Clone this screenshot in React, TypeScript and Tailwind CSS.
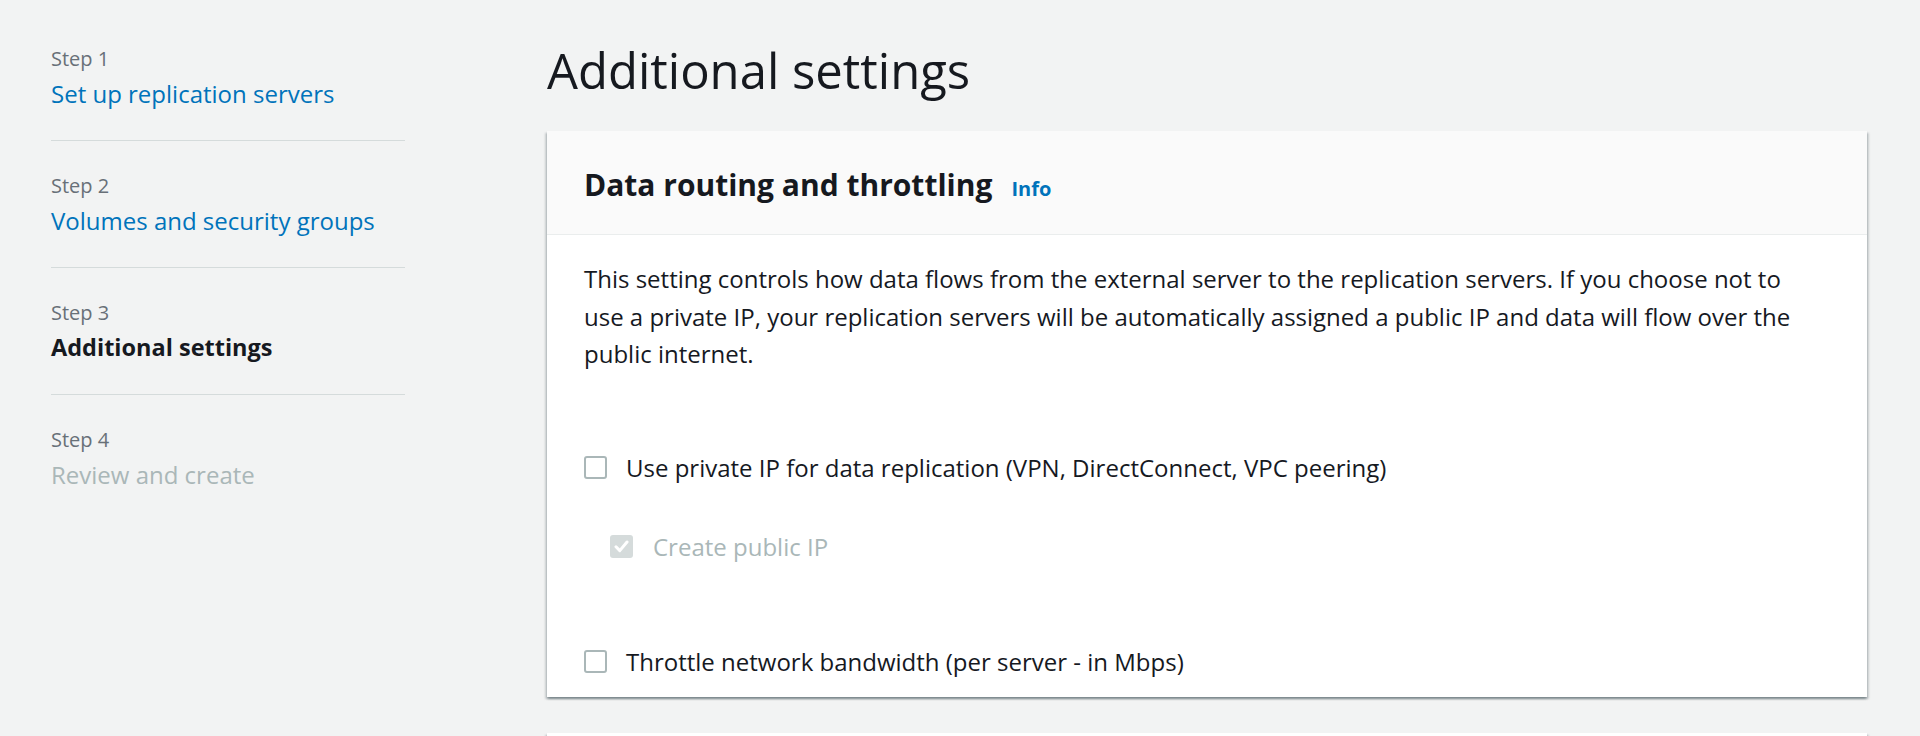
import React from "react";

const steps = [
  { label: "Step 1", title: "Set up replication servers", state: "link" },
  { label: "Step 2", title: "Volumes and security groups", state: "link" },
  { label: "Step 3", title: "Additional settings", state: "active" },
  { label: "Step 4", title: "Review and create", state: "disabled" },
];

function Box({ checked, disabled }: { checked?: boolean; disabled?: boolean }) {
  if (checked && disabled) {
    return (
      <span className="flex h-[23px] w-[23px] shrink-0 items-center justify-center rounded-[3px] bg-[#d5dbdb]">
        <svg width="15" height="13" viewBox="0 0 15 13" fill="none">
          <path d="M2 6.8 L5.8 10.6 L13 2" stroke="#ffffff" strokeWidth="3" strokeLinecap="round" strokeLinejoin="round" />
        </svg>
      </span>
    );
  }
  return <span className="block h-[23px] w-[23px] shrink-0 rounded-[3px] border-2 border-[#aab7b8] bg-white" />;
}

export default function App() {
  return (
    <div
      className="flex h-[736px] w-full overflow-hidden bg-[#f2f3f3] text-[#16191f]"
      style={{ fontFamily: '"Open Sans", "Noto Sans", sans-serif' }}
    >
      {/* wizard steps */}
      <aside className="w-[547px] shrink-0 pl-[51px] pt-[44px]">
        <ul className="w-[354px]">
          {steps.map((s, i) => (
            <li
              key={s.label}
              className={`${i > 0 ? "pt-[30.5px]" : ""} ${i < steps.length - 1 ? "border-b border-[#d5dbdb] pb-[27.5px]" : ""}`}
            >
              <div className="text-[20px] leading-[29px] text-[#687078]">{s.label}</div>
              <div
                className={`mt-[2px] leading-[37px] ${
                  s.state === "link"
                    ? "text-[24px] text-[#0073bb]"
                    : s.state === "active"
                    ? "text-[23.5px] font-bold text-[#16191f]"
                    : "text-[24px] text-[#aab7b8]"
                }`}
              >
                {s.title}
              </div>
            </li>
          ))}
        </ul>
      </aside>

      {/* main content */}
      <main className="flex-1 pr-[53px] pt-[41px]">
        <h1 className="text-[49px] font-normal leading-[58px]">Additional settings</h1>

        <section className="mt-[32px] bg-white shadow-[0_2px_2px_0_rgba(0,28,36,0.3),2px_2px_2px_0_rgba(0,28,36,0.15),-2px_2px_2px_0_rgba(0,28,36,0.15)]">
          <div className="flex items-baseline gap-[19px] border-b border-[#eaeded] bg-[#fafafa] px-[37px] pb-[29px] pt-[34px]">
            <h2 className="text-[30px] font-bold leading-[40px]">Data routing and throttling</h2>
            <span className="text-[20px] font-bold text-[#0073bb]">Info</span>
          </div>

          <div className="px-[37px] pb-[17px] pt-[25px] text-[24px] leading-[37.5px]">
            <p className="max-w-[1230px]">
              This setting controls how data flows from the external server to the replication servers. If you choose not to use
              a private IP, your replication servers will be automatically assigned a public IP and data will flow over the
              public internet.
            </p>

            <label className="mt-[76px] flex items-center gap-[19px] leading-[37px]">
              <Box />
              <span>Use private IP for data replication (VPN, DirectConnect, VPC peering)</span>
            </label>

            <label className="mt-[42px] flex items-center gap-[20px] pl-[26px] leading-[37px] text-[#aab7b8]">
              <Box checked disabled />
              <span>Create public IP</span>
            </label>

            <label className="mt-[78px] flex items-center gap-[19px] leading-[37px]">
              <Box />
              <span>Throttle network bandwidth (per server - in Mbps)</span>
            </label>
          </div>
        </section>

        <section className="mt-[36px] h-[200px] bg-white shadow-[0_2px_2px_0_rgba(0,28,36,0.3),2px_2px_2px_0_rgba(0,28,36,0.15),-2px_2px_2px_0_rgba(0,28,36,0.15)]" />
      </main>
    </div>
  );
}
